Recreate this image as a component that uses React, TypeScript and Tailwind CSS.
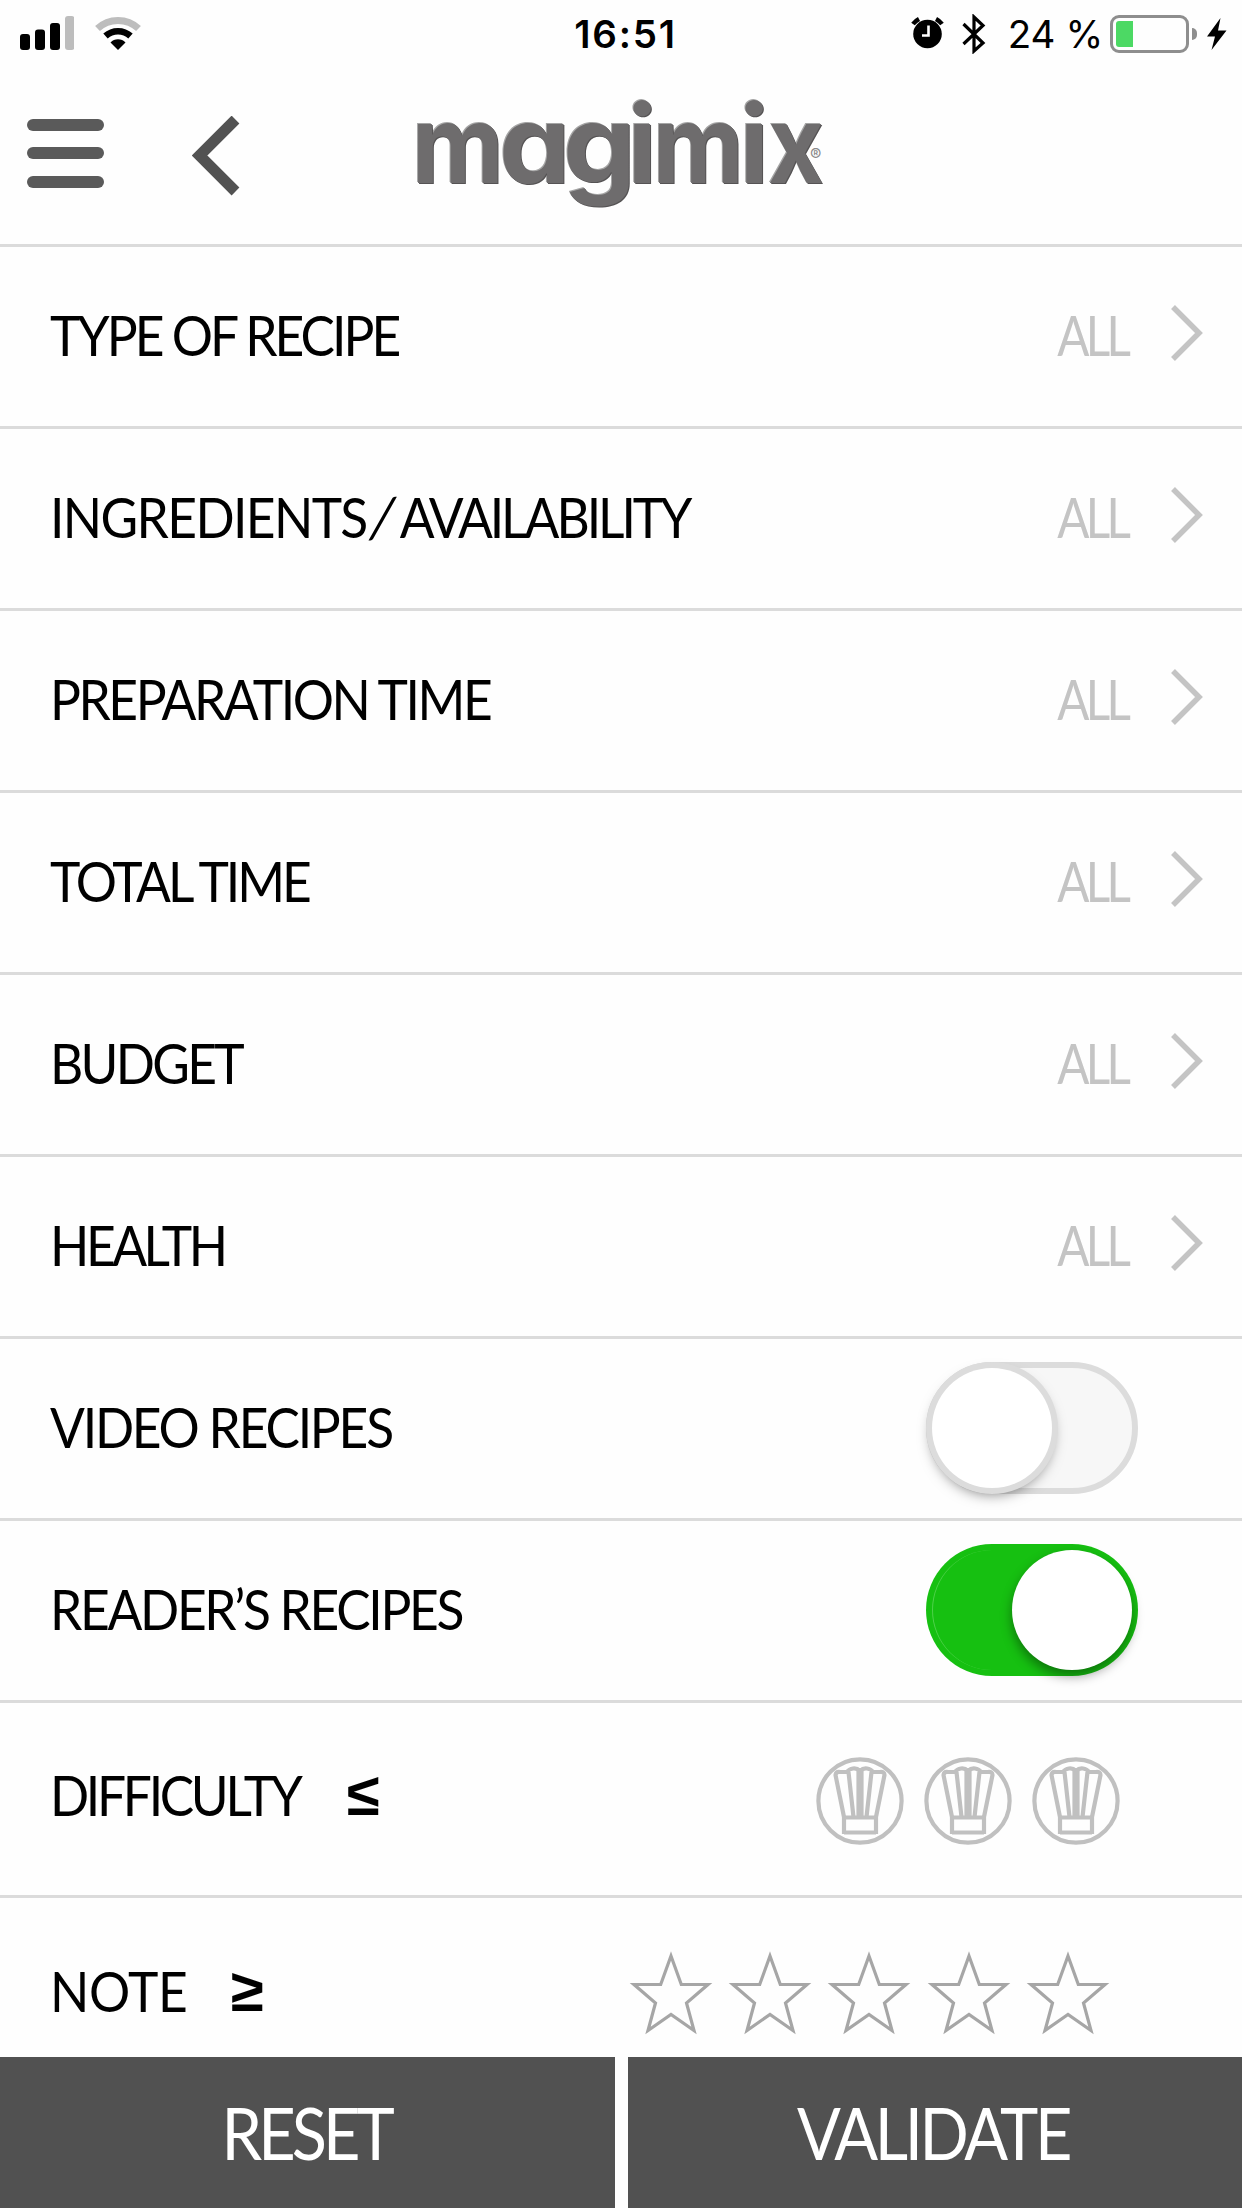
import React from "react";

const filters: { label: React.ReactNode; key: string; tracking: string }[] = [
  { key: "type", label: "TYPE OF RECIPE", tracking: "tracking-[-3.2px]" },
  {
    key: "ingredients",
    label: (
      <>
        INGREDIENTS<span className="inline-block w-[36px] -skew-x-12 text-center tracking-normal">/</span>
        <span className="tracking-[-3.300px]">AVAILABILITY</span>
      </>
    ),
    tracking: "tracking-[-1.75px]",
  },
  { key: "preparation", label: "PREPARATION TIME", tracking: "tracking-[-2.65px]" },
  { key: "total", label: "TOTAL TIME", tracking: "tracking-[-3.3px]" },
  { key: "budget", label: "BUDGET", tracking: "tracking-[-2.95px]" },
  { key: "health", label: "HEALTH", tracking: "tracking-[-3.75px]" },
];

function Label({ children, className = "" }: { children: React.ReactNode; className?: string }) {
  return (
    <span className={`block origin-left scale-x-[0.92] whitespace-nowrap text-[56px] leading-[64px] ${className}`}>
      {children}
    </span>
  );
}

function Row({ children, className = "" }: { children: React.ReactNode; className?: string }) {
  return (
    <div className={`flex shrink-0 items-center justify-between border-b-[3px] border-[#dbdbdb] pl-[50px] ${className}`}>
      {children}
    </div>
  );
}

function Toggle({ on = false }: { on?: boolean }) {
  return on ? (
    <div className="mb-[2px] flex h-[132px] w-[212px] items-center justify-end rounded-full bg-[#16c011] p-[6px]">
      <div className="flex flex-1 self-stretch">
        <div className="w-[60px] rounded-l-full border-l border-[#4fd04b]" />
      </div>
      <div className="size-[120px] rounded-full bg-white shadow-[0_6px_12px_rgba(0,0,0,0.4)]" />
    </div>
  ) : (
    <div className="mb-[2px] flex h-[132px] w-[212px] items-center rounded-full border-[6px] border-[#dcdcdc] bg-[#f7f7f7]">
      <div className="size-[120px] rounded-full bg-white shadow-[0_0_0_6px_#dcdcdc,0_6px_14px_rgba(0,0,0,0.5)]" />
    </div>
  );
}

function ChefHat() {
  return (
    <svg width="88" height="88" viewBox="0 0 88 88" fill="none" stroke="#c0c0c0" strokeWidth="4.2" strokeLinejoin="round">
      <circle cx="44" cy="44" r="41.6" />
      <path d="M28 77V60L19.500 18Q20 14.500 24 15H31Q33 12 37 11.500Q41 11 44 14Q47 11 51 11.500Q55 12 57 15H64Q68.500 14.500 68.500 18L60 60V77" />
      <path d="M28 60.500H60M28 75.500H60M37.500 60L32.500 15M50.500 60L55.500 15M42.500 60V14M45.500 60V14" />
    </svg>
  );
}

function Star() {
  return (
    <svg width="84" height="86" viewBox="0 0 84 86" fill="none" stroke="#a6a6a6" strokeWidth="3.2">
      <path d="M42 6L52.300 34.500H79L57.500 53L65 80.500L42 64.500L19 80.500L26.500 53L5 34.500H31.700Z" />
    </svg>
  );
}

function StatusBar() {
  return (
    <div className="grid h-[68px] grid-cols-3 items-center font-[Inter] text-[38.500px] leading-[68px] text-black">
      <div className="flex items-center gap-[21px] pl-5 pb-[2px]">
        <svg width="54" height="34" viewBox="0 0 54 34">
          <rect x="0" y="18" width="10" height="16" rx="3" />
          <rect x="15" y="13.500" width="10" height="20.500" rx="3" />
          <rect x="30" y="7" width="10" height="27" rx="3" />
          <rect x="45" y="0" width="9.500" height="34" rx="3" fill="#bdbdbd" />
        </svg>
        <svg width="46" height="34" viewBox="0 0 46 34" fill="none">
          <path d="M2.500 12.500A30 30 0 0 1 43.500 12.500" stroke="#bdbdbd" strokeWidth="7" />
          <path d="M10.500 20A18.500 18.500 0 0 1 35.500 20" stroke="#000" strokeWidth="6.500" />
          <path d="M23 34L15.500 26.500A10.500 10.500 0 0 1 30.500 26.500Z" fill="#000" />
        </svg>
      </div>
      <div className="pl-[9px] text-center font-semibold tracking-[1.800px]">16:51</div>
      <div className="flex items-center justify-end pr-[15px]">
        <svg width="33" height="32" viewBox="0 0 33 32" className="mr-[18px] mb-[3px]">
          <circle cx="16.500" cy="17" r="14.300" />
          <path d="M2 7A18 18 0 0 1 8 2M25 2A18 18 0 0 1 31 7" stroke="#000" strokeWidth="4.500" fill="none" />
          <path d="M17.500 8.500V18.500H11" stroke="#fff" strokeWidth="2.600" fill="none" />
        </svg>
        <svg width="24" height="40" viewBox="0 0 24 40" fill="none" stroke="#000" strokeWidth="3.200" className="mr-[22px] mb-[1px]">
          <path d="M1.500 10L21 29L12 37V3L21 11.500L1.500 30" />
        </svg>
        <span className="whitespace-pre tracking-[-0.300px]">24 %</span>
        <div className="ml-[7px] flex h-[38px] w-[79px] rounded-[9px] border-[3px] border-[#8e8e8e] p-[3px]">
          <div className="w-[17px] rounded-l-[3px] bg-[#4cd964]" />
        </div>
        <div className="ml-[3px] h-[12px] w-[5px] rounded-r-full bg-[#8e8e8e]" />
        <svg width="20" height="32" viewBox="0 0 20 32" className="ml-[10px]">
          <path d="M13.500 0L0 18.500H8L4.500 32L19.500 12.500H11Z" />
        </svg>
      </div>
    </div>
  );
}

function Logo() {
  return (
    <svg
      width="416"
      height="130"
      viewBox="412 90 416 130"
      className="overflow-visible font-[Inter] font-bold [font-feature-settings:'cv11'] [filter:drop-shadow(1px_1px_0_#555354)_drop-shadow(-1px_-1px_0_#a5a5a5)]"
      fill="#6e6c6d"
    >
      <text y="183" fontSize="108">
        <tspan x="411.700" textLength="92" lengthAdjust="spacingAndGlyphs">m</tspan>
        <tspan x="499" textLength="71.500" lengthAdjust="spacingAndGlyphs">a</tspan>
        <tspan x="563" textLength="73" lengthAdjust="spacingAndGlyphs">g</tspan>
        <tspan x="627.500">i</tspan>
        <tspan x="652.700" textLength="91" lengthAdjust="spacingAndGlyphs">m</tspan>
        <tspan x="739.500">i</tspan>
        <tspan x="768" textLength="56" lengthAdjust="spacingAndGlyphs">x</tspan>
      </text>
    </svg>
  );
}

function Header() {
  return (
    <header className="grid h-[179px] grid-cols-[412px_416px_1fr] border-b-[3px] border-[#dbdbdb]">
      <div className="flex gap-[88px] pl-[27px] pt-[48px]">
        <div className="flex flex-col pt-[3px]">
          <div className="h-[12px] w-[77px] rounded-full bg-[#5a5a5a]" />
          <div className="mt-[16px] h-[12px] w-[77px] rounded-full bg-[#5a5a5a]" />
          <div className="mt-[17px] h-[12px] w-[77px] rounded-full bg-[#5a5a5a]" />
        </div>
        <svg width="48" height="80" viewBox="0 0 48 80" fill="none" stroke="#525252" strokeWidth="11">
          <path d="M43.500 3.500L7.500 39.500L43.500 75.500" />
        </svg>
      </div>
      <div className="relative pt-[22px]">
        <Logo />
        <span className="absolute left-[398px] top-[77px] font-[Inter] text-[17px] leading-[20px] text-[#8a8a8a]">®</span>
      </div>
    </header>
  );
}

export default function App() {
  return (
    <div className="flex h-[2208px] w-[1242px] flex-col overflow-hidden bg-[#fefefe] font-[Lato,sans-serif] text-black">
      <StatusBar />
      <Header />
      <main className="flex flex-1 flex-col overflow-hidden">
        {filters.map((f) => (
          <Row key={f.key} className="h-[182px] pb-[3px] pr-[39px]">
            <Label className={f.tracking}>{f.label}</Label>
            <div className="flex items-center">
              <span className="mr-[43px] block origin-right scale-x-[0.85] text-[56px] leading-[64px] tracking-[-4.400px] text-[#c4c4c4]">ALL</span>
              <svg width="33" height="58" viewBox="0 0 33 58" fill="none" stroke="#c4c4c4" strokeWidth="5.500" className="mb-[4px]">
                <path d="M3 3L29 29L3 55" />
              </svg>
            </div>
          </Row>
        ))}
        <Row className="h-[182px] pr-[104px]">
          <Label className="pb-[3px] tracking-[-2.400px]">VIDEO RECIPES</Label>
          <Toggle />
        </Row>
        <Row className="h-[182px] pr-[104px]">
          <Label className="pb-[3px] tracking-[-2.500px]">READER’S RECIPES</Label>
          <Toggle on />
        </Row>
        <Row className="h-[195px] pr-[122px]">
          <div className="flex items-center pb-[9px]">
            <Label className="w-[297px] tracking-[-3.600px]">DIFFICULTY</Label>
            <span className="font-['Liberation_Sans'] text-[60px] font-bold leading-[64px]">≤</span>
          </div>
          <div className="flex gap-5 pt-[3px]">
            <ChefHat />
            <ChefHat />
            <ChefHat />
          </div>
        </Row>
        <Row className="h-[195px] pr-[132px]">
          <div className="flex items-center pb-[7px]">
            <Label className="w-[181px] tracking-[-0.500px]">NOTE</Label>
            <span className="font-['Liberation_Sans'] text-[60px] font-bold leading-[64px]">≥</span>
          </div>
          <div className="flex gap-[15.300px] pb-[2px]">
            <Star />
            <Star />
            <Star />
            <Star />
            <Star />
          </div>
        </Row>
      </main>
      <footer className="grid h-[151px] shrink-0 grid-cols-2 gap-[13px] text-[72px] leading-[151px] text-white">
        <button className="flex items-center justify-center bg-[#515151] pr-[2px]">
          <span className="scale-x-90 tracking-[-4.300px]">RESET</span>
        </button>
        <button className="flex items-center justify-center bg-[#515151] pr-[4px]">
          <span className="scale-x-90 tracking-[-3.700px]">VALIDATE</span>
        </button>
      </footer>
    </div>
  );
}
